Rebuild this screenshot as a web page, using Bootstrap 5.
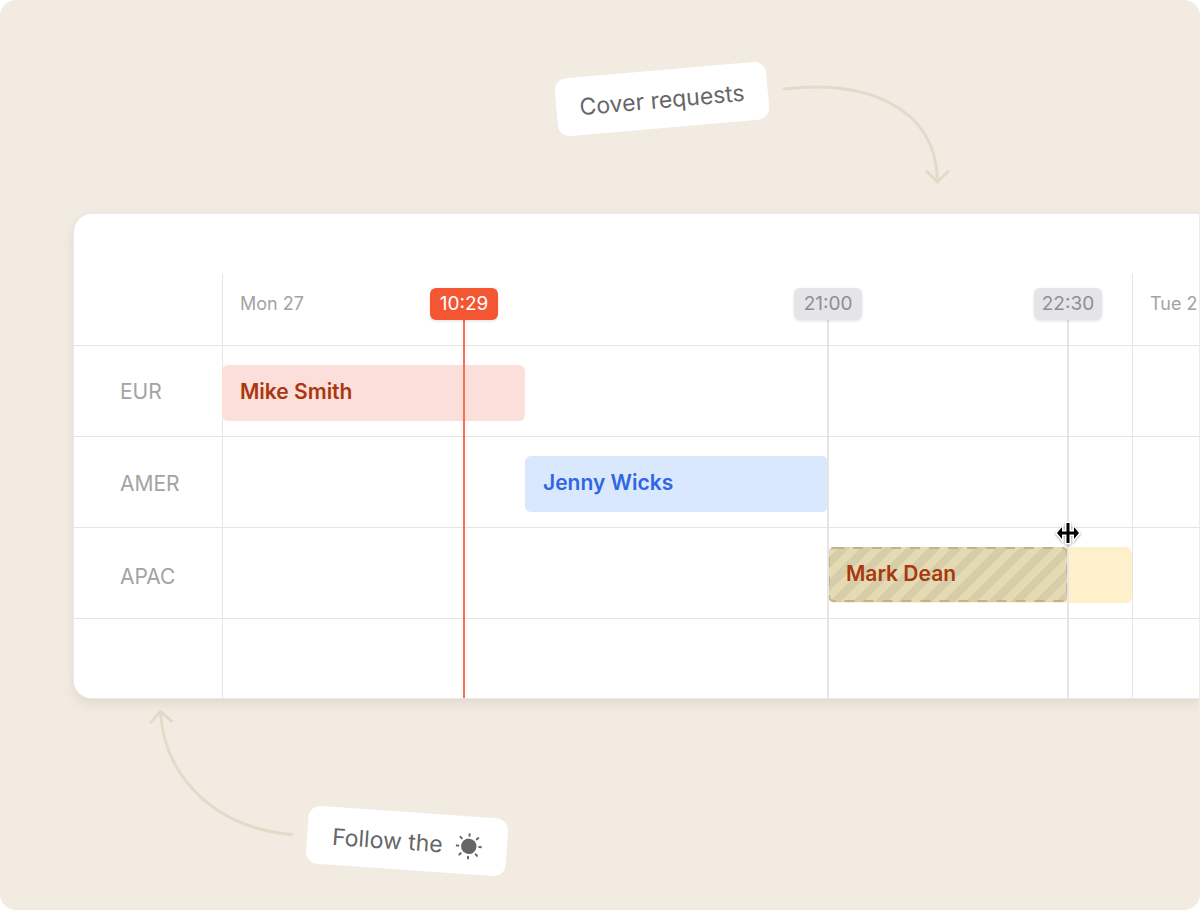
<!DOCTYPE html>
<html lang="en">
<head>
<meta charset="utf-8">
<meta name="viewport" content="width=device-width, initial-scale=1">
<title>On-call schedule</title>
<link href="https://cdn.jsdelivr.net/npm/bootstrap@5.3.0/dist/css/bootstrap.min.css" rel="stylesheet">
<style>
  :root { --sand: #f2ebe1; --sand-dark: #e3dac9; --rule: #e5e5e7; }
  body { font-family: Inter, "Liberation Sans", sans-serif; background: #fff; }
  .stage { background: var(--sand); border-radius: 16px; }
  .top-notes { height: 214px; padding: 70px 250px 0 0; gap: 13px; }
  .bottom-notes { height: 212px; padding-left: 148px; gap: 13px; }
  .note { background: #fff; border-radius: 12px; height: 58px; padding-top: 2px; font-size: 23px; color: #666668; }
  .note-cover { width: 212px; transform: rotate(-5deg); }
  .note-sun { width: 200px; gap: 13px; margin-top: 114px; transform: rotate(4deg); }
  .curve { fill: none; stroke: var(--sand-dark); stroke-width: 3; stroke-linecap: round; stroke-linejoin: round; }
  .curve-top { margin-top: 12px; }
  .curve-bottom { margin-top: 8px; }

  .board { margin: 0 1px 0 74px; padding-top: 60px; border: 0; border-radius: 18px 0 0 18px; box-shadow: 0 0 0 1px #e9e9ee, 0 5px 12px rgba(90, 70, 40, .12); clip-path: inset(-40px 0 -40px -40px); }
  .region-col { width: 148px; }
  .days { height: 72px; border-bottom: 1px solid var(--rule); }
  .slots { display: grid; grid-template-columns: 303fr 303fr 240fr 64fr 67fr; }
  .day { font-size: 18px; line-height: 24px; color: #a3a3a3; padding: 18px 0 0 18px; white-space: nowrap; }
  .day-first { grid-column: 1; }
  .day-next { grid-column: 5; }
  .lanes { height: 352px; border-bottom-left-radius: 18px; background: repeating-linear-gradient(#fff 0 90px, var(--rule) 90px 91px); }
  .regions { padding: 0 0 0 46px; font-size: 21px; line-height: 93px; color: #a3a3a3; }
  .regions li:first-child { line-height: 91px; }
  .lane { height: 91px; padding-top: 19px; }
  .shift { height: 56px; border-radius: 6px; font-size: 21px; font-weight: 600; line-height: 54px; padding-left: 18px; white-space: nowrap; }
  .shift-eur { background: #fcdfda; color: #a8380e; grid-column: 1; }
  .shift-amer { background: #dae8fe; color: #2f66e3; grid-column: 2; }
  .shift-apac { background: #fdf0ca; color: #a8380e; grid-column: 3 / 5; padding: 0; display: grid; grid-template-columns: 240fr 64fr; }
  .cover { height: 55px; padding-left: 18px; background: repeating-linear-gradient(135deg, #e4dbb4 0 8px, #d7cda8 8px 16px); border-radius: 6px; }
  .overlay { top: 60px; bottom: 0; left: 148px; right: 0; pointer-events: none; }
  .day-rule { border-left: 1px solid var(--rule); }
  .marker { top: 14px; bottom: 0; width: 0; }
  .marker::before { content: ""; position: absolute; top: 30px; bottom: 0; left: -1px; width: 2px; background: var(--rule); }
  .marker-now::before { background: #f86f52; }
  .marker time { position: relative; width: 68px; height: 32px; border-radius: 6px; font-size: 19px; line-height: 31px; color: #8e8e90; background: #e5e5e7; box-shadow: 0 1px 3px rgba(0,0,0,.12); flex: none; text-align: center; }
  .marker-now time { background: #f45532; color: #fff; }
  .resize-cursor { position: absolute; top: 229px; left: -16px; filter: drop-shadow(0 1px 1px rgba(0,0,0,.35)); }
</style>
</head>
<body>
<main class="stage overflow-hidden">
  <section class="top-notes d-flex justify-content-end align-items-start">
    <div class="note note-cover d-flex align-items-center justify-content-center text-nowrap">Cover requests</div>
    <svg class="curve curve-top" width="169" height="104" viewBox="781 82 169 104" aria-hidden="true"><path d="M784.500 89C862 80 936 104 937.500 181M927 171.500l10.500 10.500L948 171.500"/></svg>
  </section>

  <section class="board card position-relative">
    <div class="days d-flex">
      <div class="region-col flex-shrink-0"></div>
      <div class="slots flex-grow-1">
        <div class="day day-first">Mon 27</div>
        <div class="day day-next">Tue 2</div>
      </div>
    </div>
    <div class="lanes d-flex">
      <ul class="regions region-col list-unstyled flex-shrink-0 m-0">
        <li>EUR</li><li>AMER</li><li>APAC</li>
      </ul>
      <div class="flex-grow-1 position-relative z-1">
        <div class="lane slots"><div class="shift shift-eur">Mike Smith</div></div>
        <div class="lane slots"><div class="shift shift-amer">Jenny Wicks</div></div>
        <div class="lane slots">
          <div class="shift shift-apac"><div class="cover position-relative">
            <svg class="position-absolute top-0 start-0 w-100 h-100" aria-hidden="true"><rect x="1" y="1" width="99.200%" height="53" rx="5" fill="none" stroke="#bfb38c" stroke-width="2" stroke-dasharray="10 9"/></svg>
            <span class="position-relative">Mark Dean</span></div></div>
        </div>
      </div>
    </div>

    <div class="overlay slots position-absolute">
      <div class="day-rule"></div><div></div><div></div><div></div><div class="day-rule"></div>
    </div>
    <div class="overlay position-absolute z-2">
      <div class="marker marker-now position-absolute d-flex justify-content-center" style="left:24.770%"><time>10:29</time></div>
      <div class="marker position-absolute d-flex justify-content-center" style="left:62.030%"><time>21:00</time></div>
      <div class="marker position-absolute d-flex justify-content-center" style="left:86.590%"><time>22:30</time>
        <svg class="resize-cursor" width="32" height="32" viewBox="-16 -16 32 32" aria-hidden="true"><path d="M-1.500-10V-1.500H-6V-6L-11 0L-6 6V1.500H-1.500V10H1.500V1.500H6V6L11 0L6-6V-1.500H1.500V-10Z" fill="#000" stroke="#fff" stroke-width="3" paint-order="stroke"/></svg>
      </div>
    </div>
  </section>

  <section class="bottom-notes d-flex align-items-start">
    <svg class="curve curve-bottom" width="146" height="132" viewBox="148 706 146 132" aria-hidden="true"><path d="M291.500 834.500C222 829 165 783 160.500 712M151 722l9.500-10.500L171.500 721"/></svg>
    <div class="note note-sun d-flex align-items-center justify-content-center text-nowrap">Follow the
      <svg width="26" height="26" viewBox="-13 -13 26 26" aria-hidden="true"><circle r="7.700" fill="#666668"/><path d="M0-10.500V-12.500M0 10.500V12.500M-10.500 0H-12.500M10.500 0H12.500M7.500 7.500L8.900 8.900M-7.500 7.500L-8.900 8.900M7.500-7.500L8.900-8.900M-7.500-7.500L-8.900-8.900" stroke="#666668" stroke-width="2" stroke-linecap="round"/></svg>
    </div>
  </section>
</main>
<script src="https://cdn.jsdelivr.net/npm/bootstrap@5.3.0/dist/js/bootstrap.bundle.min.js"></script>
</body>
</html>
